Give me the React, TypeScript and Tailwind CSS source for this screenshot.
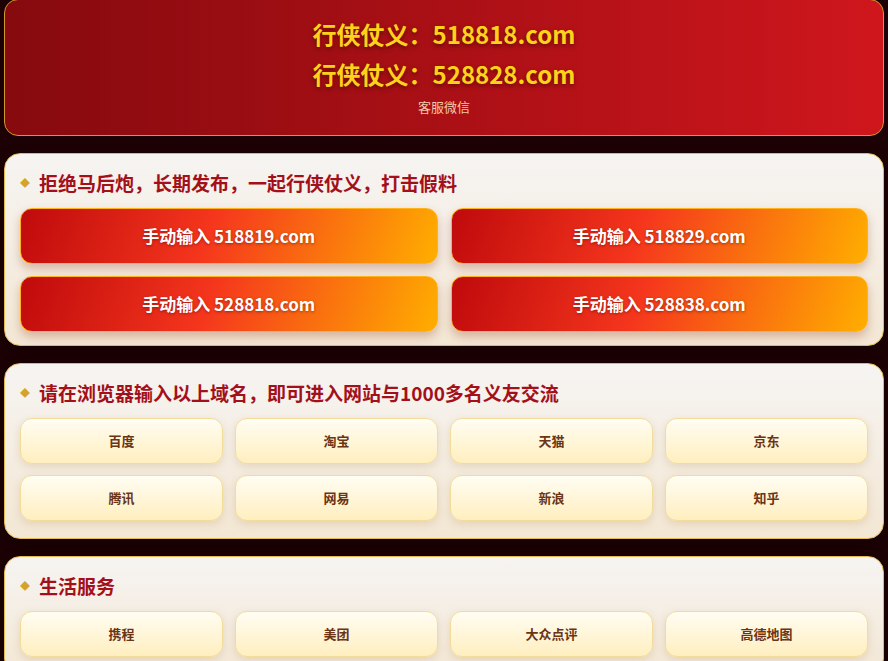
import React from "react";

const domains = ["518819.com", "518829.com", "528818.com", "528838.com"];
const sites = ["百度", "淘宝", "天猫", "京东", "腾讯", "网易", "新浪", "知乎"];
const life = ["携程", "美团", "大众点评", "高德地图"];

const font = {
  fontFamily: '"Noto Sans CJK SC", "Noto Sans", sans-serif',
};

const SectionTitle: React.FC<{ text: string }> = ({ text }) => (
  <div className="flex items-center gap-[9px] mb-[12px]">
    <span className="text-[#d4a32a] text-[10px] leading-none">◆</span>
    <h2 className="text-[19px] font-bold text-[#a3101a] leading-[26px]">
      {text}
    </h2>
  </div>
);

const LightButton: React.FC<{ label: string }> = ({ label }) => (
  <button className="h-[46px] rounded-[12px] border border-[#f3dc9a] bg-gradient-to-b from-[#fffdf3] to-[#ffefbf] text-[13px] font-bold text-[#6b3414] shadow-[0_3px_8px_rgba(160,110,40,0.18)]">
    {label}
  </button>
);

export default function App() {
  return (
    <div
      className="min-h-screen bg-[#1c0204] px-[4px] pb-6 flex flex-col gap-[17px]"
      style={font}
    >
      <header className="rounded-[14px] border border-[#d09a2a] bg-gradient-to-r from-[#860a0e] to-[#cf161d] pt-[14px] pb-[18px] flex flex-col items-center -mt-px">
        <div className="text-[24px] font-bold text-[#ffd21a] leading-[40px] [text-shadow:0_2px_4px_rgba(60,0,0,0.6)]">
          行侠仗义：518818.com
        </div>
        <div className="text-[24px] font-bold text-[#ffd21a] leading-[40px] [text-shadow:0_2px_4px_rgba(60,0,0,0.6)]">
          行侠仗义：528828.com
        </div>
        <div className="text-[13px] text-[#f4c9a8] mt-[3px] leading-[20px]">
          客服微信
        </div>
      </header>

      <section className="rounded-[16px] border border-[#e2b955] bg-gradient-to-b from-[#f6f4f2] to-[#f3e7d4] px-[15px] pt-[16px] pb-[13px] shadow-[0_4px_14px_rgba(0,0,0,0.3)]">
        <SectionTitle text="拒绝马后炮，长期发布，一起行侠仗义，打击假料" />
        <div className="grid grid-cols-2 gap-x-[13px] gap-y-[12px]">
          {domains.map((d) => (
            <button
              key={d}
              className="h-[56px] rounded-[12px] border border-[#ffb21a] bg-[linear-gradient(110deg,#bf0a0c_0%,#f5361d_45%,#ffae00_100%)] text-[17px] font-bold text-white shadow-[0_5px_10px_rgba(150,60,30,0.3)] [text-shadow:0_1px_3px_rgba(80,0,0,0.5)]"
            >
              手动输入 {d}
            </button>
          ))}
        </div>
      </section>

      <section className="rounded-[16px] border border-[#e2b955] bg-gradient-to-b from-[#f6f4f2] to-[#f3e7d4] px-[15px] pt-[16px] pb-[17px] shadow-[0_4px_14px_rgba(0,0,0,0.3)]">
        <SectionTitle text="请在浏览器输入以上域名，即可进入网站与1000多名义友交流" />
        <div className="grid grid-cols-4 gap-x-[12px] gap-y-[11px]">
          {sites.map((s) => (
            <LightButton key={s} label={s} />
          ))}
        </div>
      </section>

      <section className="rounded-[16px] border border-[#e2b955] bg-gradient-to-b from-[#f6f4f2] to-[#f3e7d4] px-[15px] pt-[16px] pb-[17px] shadow-[0_4px_14px_rgba(0,0,0,0.3)]">
        <SectionTitle text="生活服务" />
        <div className="grid grid-cols-4 gap-x-[12px] gap-y-[11px]">
          {life.map((s) => (
            <LightButton key={s} label={s} />
          ))}
        </div>
      </section>
    </div>
  );
}
